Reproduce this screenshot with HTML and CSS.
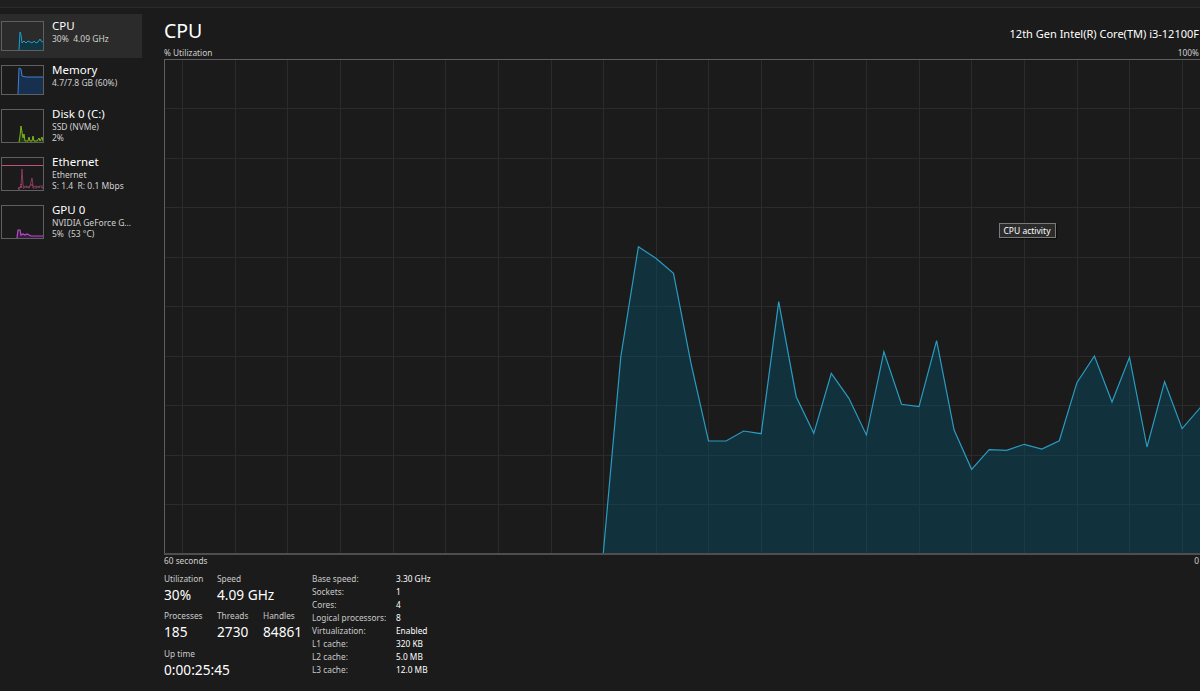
FILE: index.html
```html
<!DOCTYPE html>
<html lang="en">
<head>
<meta charset="utf-8">
<title>Task Manager - Performance</title>
<link rel="stylesheet" href="styles.css">
</head>
<body>
<div class="topbar"></div>
<div class="app">
  <nav class="sidebar">
    <div class="item selected">
      <div class="thumb">
        <svg viewBox="0 0 41 28" preserveAspectRatio="none"><polygon class="cpu-fill" points="0,28 17,28 18,10 19,13 20,21 22,19 24,21 26,19 28,20 30,21 32,19 34,21 36,20 38,17 39,19 41,20 41,28"/><polyline class="cpu-line" points="17,28 18,10 19,13 20,21 22,19 24,21 26,19 28,20 30,21 32,19 34,21 36,20 38,17 39,19 41,20"/></svg>
      </div>
      <div class="info">
        <div class="title">CPU</div>
        <div class="sub">30%&nbsp; 4.09 GHz</div>
      </div>
    </div>
    <div class="item">
      <div class="thumb">
        <svg viewBox="0 0 41 28" preserveAspectRatio="none"><polygon class="mem-fill" points="0,28 16,28 17,2 19,3 20,10 24,11 41,11 41,28"/><polyline class="mem-line" points="16,28 17,2 19,3 20,10 24,11 41,11"/></svg>
      </div>
      <div class="info">
        <div class="title">Memory</div>
        <div class="sub">4.7/7.8 GB (60%)</div>
      </div>
    </div>
    <div class="item tall">
      <div class="thumb">
        <svg viewBox="0 0 41 32" preserveAspectRatio="none"><polygon class="disk-fill" points="0,32 17,32 18,26 19,16 20,22 21,28 22,24 23,31 26,31 27,27 28,31 30,31 31,26 32,31 35,31 37,28 38,31 40,27 41,31 41,32"/><polyline class="disk-line" points="17,32 18,26 19,16 20,22 21,28 22,24 23,31 26,31 27,27 28,31 30,31 31,26 32,31 35,31 37,28 38,31 40,27 41,31"/></svg>
      </div>
      <div class="info">
        <div class="title">Disk 0 (C:)</div>
        <div class="sub">SSD (NVMe)</div>
        <div class="sub">2%</div>
      </div>
    </div>
    <div class="item tall">
      <div class="thumb">
        <svg viewBox="0 0 41 32" preserveAspectRatio="none"><polyline class="eth-top" points="0,7.5 41,7.5"/><polyline class="eth-recv" points="16,31 17,29 18,30 19,28 20,11 21,27 22,29 24,28 26,29 28,28 29,24 30,20 31,28 32,29 34,28 36,29 38,28 41,28"/><polyline class="eth-send" points="16,31 18,31 19,26 20,30 22,30 24,29 27,30 30,26 31,30 34,30 37,29 41,30"/></svg>
      </div>
      <div class="info">
        <div class="title">Ethernet</div>
        <div class="sub">Ethernet</div>
        <div class="sub">S: 1.4&nbsp; R: 0.1 Mbps</div>
      </div>
    </div>
    <div class="item tall">
      <div class="thumb">
        <svg viewBox="0 0 41 32" preserveAspectRatio="none"><polygon class="gpu-fill" points="0,32 15,32 16,24 18,24 19,29 21,28 23,29 25,28 27,29 29,30 41,30 41,32"/><polyline class="gpu-line" points="15,32 16,24 18,24 19,29 21,28 23,29 25,28 27,29 29,30 41,30"/></svg>
      </div>
      <div class="info">
        <div class="title">GPU 0</div>
        <div class="sub">NVIDIA GeForce G...</div>
        <div class="sub">5%&nbsp; (53 °C)</div>
      </div>
    </div>
  </nav>

  <main class="pane">
    <header class="head">
      <h1 class="page-title">CPU</h1>
      <div class="model">12th Gen Intel(R) Core(TM) i3-12100F</div>
    </header>
    <div class="axis axis-top"><span>% Utilization</span><span>100%</span></div>
    <div class="graph">
      <svg class="graph-svg" width="1039" height="496" viewBox="0 0 1039 496">
        <path class="grid" d="M0 49.5H1039M0 99.5H1039M0 148.5H1039M0 198.5H1039M0 247.5H1039M0 297.5H1039M0 346.5H1039M0 396.5H1039M0 445.5H1039M18.5 0V494M71.5 0V494M123.5 0V494M176.5 0V494M229.5 0V494M281.5 0V494M334.5 0V494M387.5 0V494M439.5 0V494M492.5 0V494M544.5 0V494M597.5 0V494M649.5 0V494M702.5 0V494M755.5 0V494M807.5 0V494M860.5 0V494M913.5 0V494M965.5 0V494M1018.5 0V494"/>
        <polygon class="area" points="439.3,494 456.8,297.7 474.4,187.7 491.9,199.3 509.5,214.3 527,304.3 544.5,382 562.1,382 579.6,372 597.2,374.7 614.7,242.7 632.2,337.7 649.8,374.3 667.3,314.3 684.9,339.3 702.4,376 719.9,292.7 737.5,345.3 755,347.7 772.6,281.7 790.1,371 807.6,410.3 825.2,390.7 842.7,391.3 860.3,385.3 877.8,390 895.3,381.7 912.9,323.7 930.4,297 948,343 965.5,298.3 983,388 1000.6,322.7 1018.1,369.7 1035.7,349.3 1053.2,330 1053.2,494"/>
        <polyline class="line" points="439.3,494 456.8,297.7 474.4,187.7 491.9,199.3 509.5,214.3 527,304.3 544.5,382 562.1,382 579.6,372 597.2,374.7 614.7,242.7 632.2,337.7 649.8,374.3 667.3,314.3 684.9,339.3 702.4,376 719.9,292.7 737.5,345.3 755,347.7 772.6,281.7 790.1,371 807.6,410.3 825.2,390.7 842.7,391.3 860.3,385.3 877.8,390 895.3,381.7 912.9,323.7 930.4,297 948,343 965.5,298.3 983,388 1000.6,322.7 1018.1,369.7 1035.7,349.3 1053.2,330"/>
        <path class="frame" d="M0.5 494V0.5H1038.5V494"/>
        <path class="frame-bottom" d="M0 495H1039"/>
      </svg>
      <div class="tooltip">CPU activity</div>
    </div>
    <div class="axis axis-bottom"><span>60 seconds</span><span>0</span></div>

    <section class="stats">
      <div class="live">
        <div class="stat">
          <div class="label">Utilization</div>
          <div class="value">30%</div>
        </div>
        <div class="stat span2">
          <div class="label">Speed</div>
          <div class="value">4.09 GHz</div>
        </div>
        <div class="stat">
          <div class="label">Processes</div>
          <div class="value">185</div>
        </div>
        <div class="stat">
          <div class="label">Threads</div>
          <div class="value">2730</div>
        </div>
        <div class="stat">
          <div class="label">Handles</div>
          <div class="value">84861</div>
        </div>
        <div class="stat span3">
          <div class="label">Up time</div>
          <div class="value">0:00:25:45</div>
        </div>
      </div>
      <dl class="specs">
        <dt>Base speed:</dt><dd>3.30 GHz</dd>
        <dt>Sockets:</dt><dd>1</dd>
        <dt>Cores:</dt><dd>4</dd>
        <dt>Logical processors:</dt><dd>8</dd>
        <dt>Virtualization:</dt><dd>Enabled</dd>
        <dt>L1 cache:</dt><dd>320 KB</dd>
        <dt>L2 cache:</dt><dd>5.0 MB</dd>
        <dt>L3 cache:</dt><dd>12.0 MB</dd>
      </dl>
    </section>
  </main>
</div>
</body>
</html>
```
FILE: styles.css
```css
* { box-sizing: border-box; }

html, body {
  margin: 0;
  padding: 0;
}

body {
  width: 1200px;
  height: 691px;
  overflow: hidden;
  background: #1b1b1b;
  color: #ffffff;
  font-family: "Segoe UI", "Noto Sans", "Open Sans", sans-serif;
}

.topbar {
  height: 8px;
  background: #1f1f1f;
  border-bottom: 1px solid #2a2a2a;
}

.app {
  display: flex;
  width: 1200px;
  padding-top: 6px;
}

/* ---------- sidebar ---------- */
.sidebar {
  width: 142px;
  flex: none;
  display: flex;
  flex-direction: column;
}

.item {
  display: flex;
  align-items: center;
  gap: 8px;
  height: 44px;
  padding: 0 0 0 1px;
}

.item.tall { height: 48px; }

.item.selected { background: #2b2b2b; }

.thumb {
  width: 43px;
  height: 30px;
  flex: none;
  border: 1px solid #5f5f5f;
}

.item.tall .thumb { height: 34px; }

.thumb svg {
  display: block;
  width: 100%;
  height: 100%;
}

.info {
  align-self: flex-start;
  margin-top: 4px;
  white-space: nowrap;
}

.title {
  font-size: 11.5px;
  line-height: 15px;
  color: #ffffff;
}

.sub {
  font-size: 8.5px;
  line-height: 11px;
  color: #d0d0d0;
}

.cpu-fill { fill: #0f3642; }
.cpu-line { fill: none; stroke: #1e9ec4; stroke-width: 1; }
.mem-fill { fill: #17304f; }
.mem-line { fill: none; stroke: #3f80d0; stroke-width: 1; }
.disk-fill { fill: #28380f; }
.disk-line { fill: none; stroke: #7cb81c; stroke-width: 1; }
.eth-top { fill: none; stroke: #c2507f; stroke-width: 1; }
.eth-recv { fill: none; stroke: #8a3a5e; stroke-width: 1; }
.eth-send { fill: none; stroke: #a8486f; stroke-width: 1; stroke-dasharray: 2 1; }
.gpu-fill { fill: #3a1a44; }
.gpu-line { fill: none; stroke: #b44fc4; stroke-width: 1.2; }

/* ---------- main pane ---------- */
.pane {
  flex: none;
  width: 1035px;
  margin-left: 22px;
  padding-top: 4px;
  position: relative;
}

.head {
  display: flex;
  justify-content: space-between;
  align-items: flex-start;
  height: 26px;
}

.page-title {
  margin: 0;
  font-size: 19.5px;
  line-height: 26px;
  font-weight: 400;
  color: #ffffff;
}

.model {
  margin-top: 9px;
  font-size: 11px;
  line-height: 14px;
  color: #ffffff;
  white-space: nowrap;
}

.axis {
  display: flex;
  justify-content: space-between;
  font-size: 8.3px;
  color: #cfcfcf;
  white-space: nowrap;
}

.axis-top {
  margin-top: 3px;
  height: 11px;
  line-height: 11px;
}

.graph {
  position: relative;
  margin-top: 1px;
  height: 496px;
}

.graph-svg { display: block; }

.grid {
  fill: none;
  stroke: #2b2b2b;
  stroke-width: 1;
  shape-rendering: crispEdges;
}

.area { fill: rgba(2, 82, 110, 0.4); }

.line {
  fill: none;
  stroke: #2b9bc0;
  stroke-width: 1.2;
  stroke-linejoin: miter;
}

.frame {
  fill: none;
  stroke: #5e5e5e;
  stroke-width: 1;
  shape-rendering: crispEdges;
}

.frame-bottom {
  fill: none;
  stroke: #4e4e4e;
  stroke-width: 2;
  shape-rendering: crispEdges;
}

.tooltip {
  position: absolute;
  left: 835px;
  top: 164px;
  height: 15px;
  padding: 0 5px 0 3.5px;
  background: #2b2b2b;
  border: 1px solid #7a7a7a;
  font-size: 8.5px;
  line-height: 13px;
  color: #ffffff;
  white-space: nowrap;
  box-shadow: 1px 1px 1px rgba(0, 0, 0, 0.5);
}

.axis-bottom {
  height: 12px;
  line-height: 12px;
}

/* ---------- stats ---------- */
.stats {
  display: flex;
  margin-top: 5.5px;
}

.live {
  width: 148px;
  flex: none;
  display: grid;
  grid-template-columns: 53px 46px auto;
  row-gap: 5.5px;
  align-content: start;
}

.span2 { grid-column: span 2; }
.span3 { grid-column: span 3; }

.label {
  font-size: 8.3px;
  line-height: 12px;
  color: #cacaca;
  white-space: nowrap;
}

.value {
  font-size: 13.7px;
  line-height: 20px;
  color: #ffffff;
  white-space: nowrap;
}

.specs {
  margin: -1px 0 0 0;
  display: grid;
  grid-template-columns: 84px auto;
  grid-auto-rows: 13.1px;
  font-size: 8.3px;
  line-height: 13.1px;
  white-space: nowrap;
}

.specs dt {
  color: #cacaca;
}

.specs dd {
  margin: 0;
  color: #ffffff;
}
```
